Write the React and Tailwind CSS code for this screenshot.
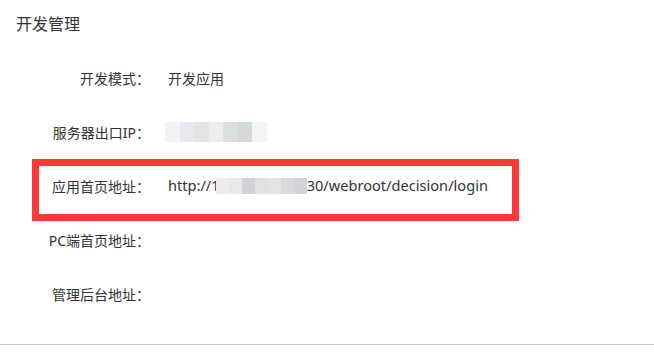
import React from 'react';

const rows = [
  { label: '开发模式：', value: <span>开发应用</span> },
  { label: '服务器出口IP：', value: <IpBlur /> },
  { label: '应用首页地址：', value: <UrlValue />, marked: true },
  { label: 'PC端首页地址：', value: null },
  { label: '管理后台地址：', value: null },
];

/** Mosaic blocks standing in for the redacted server IP. */
function IpBlur() {
  const blocks = ['#f1f2f1', '#e7e9ec', '#e3e4e4', '#ededee', '#dcdedf', '#d5d8d9', '#f3f4f5'];
  return (
    <span className="flex h-[20px] -ml-[3px]">
      {blocks.map((c, i) => (
        <span key={i} className="h-full w-[14.5px]" style={{ backgroundColor: c }} />
      ))}
    </span>
  );
}

function UrlValue() {
  const blocks = ['#ececec', '#e6e7e8', '#cfd3d6', '#e0e2e2', '#e4e4e4', '#d8dadb', '#d2d5d7'];
  return (
    <span className="flex items-center text-[14.6px]">
      <span>http://1</span>
      <span className="flex h-[16px] -ml-[4px]">
        {blocks.map((c, i) => (
          <span key={i} className="h-full w-[13px]" style={{ backgroundColor: c }} />
        ))}
      </span>
      <span>30/webroot/decision/login</span>
    </span>
  );
}

export default function App() {
  return (
    <div
      className="w-[654px] h-[353px] bg-white text-[#333] overflow-hidden"
      style={{ fontFamily: '"Noto Sans", "Noto Sans CJK SC", sans-serif' }}
    >
      <div className="pl-[16px] pt-[13px] text-[16px] leading-[22px]">开发管理</div>

      <div className="mt-[16px]">
        {rows.map((r) => (
          <div key={r.label} className="relative flex items-center h-[54px] text-[14px]">
            <span className="w-[150px] text-right shrink-0">{r.label}</span>
            <span className="ml-[18px] flex items-center">{r.value}</span>
            {r.marked && (
              <span className="absolute left-[32px] top-0 w-[487px] h-[62px] border-[7px] border-[#fc3a3a]" />
            )}
          </div>
        ))}
      </div>

      <div className="mt-[23px] border-t border-[#cccccc]" />
    </div>
  );
}
